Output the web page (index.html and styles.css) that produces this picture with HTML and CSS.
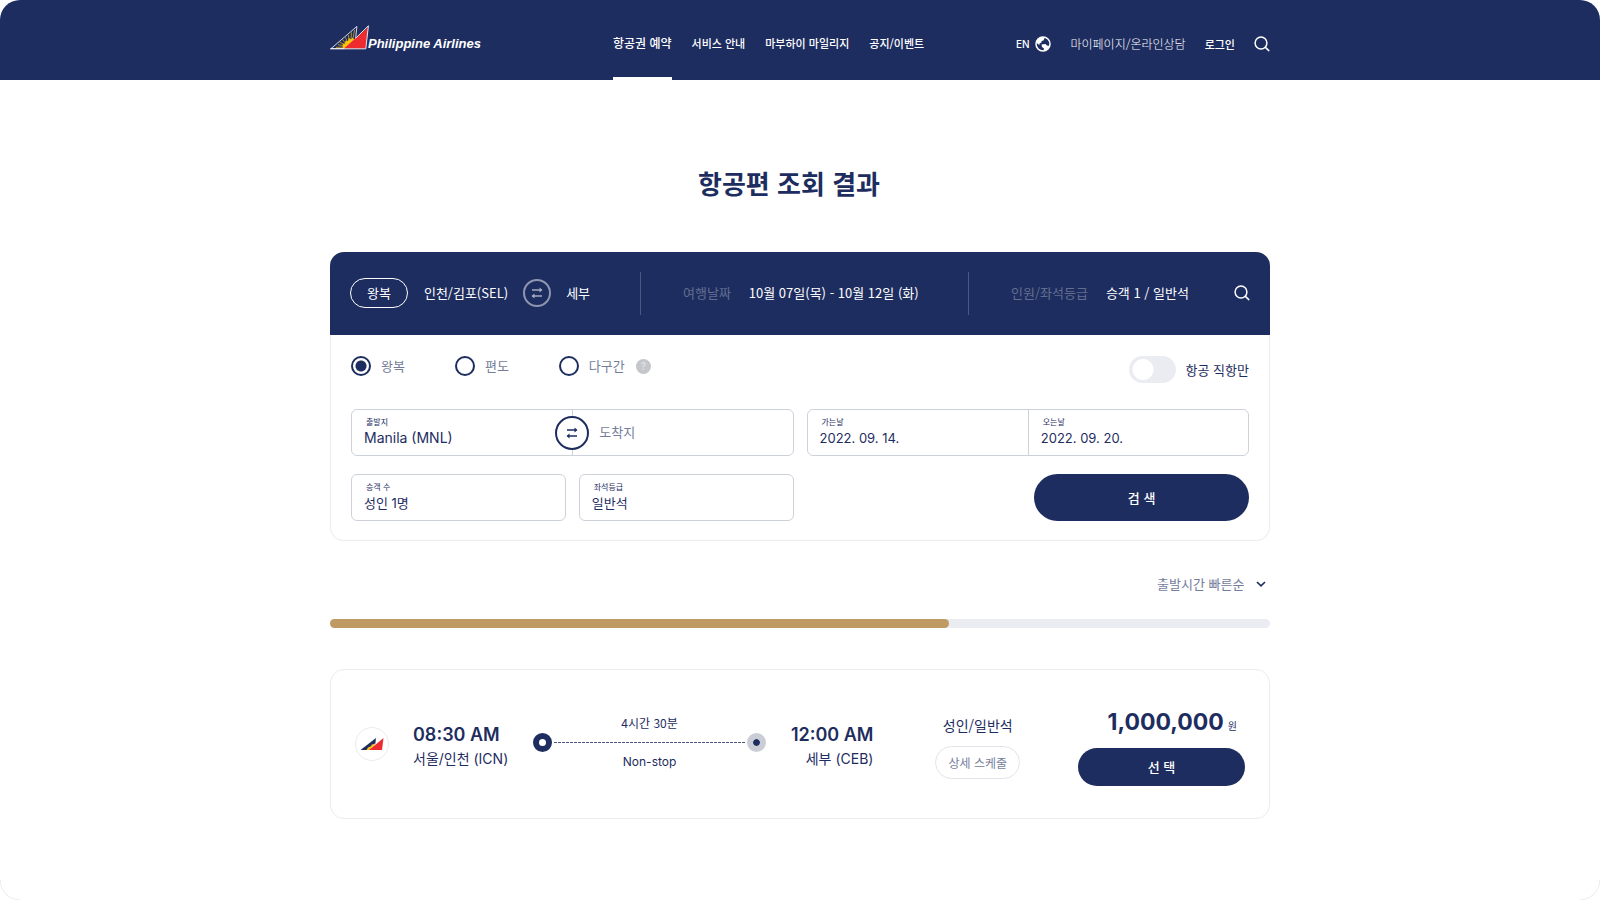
FILE: index.html
```html
<!DOCTYPE html>
<html lang="ko">
<head>
<meta charset="utf-8">
<meta name="viewport" content="width=device-width, initial-scale=1">
<title>항공편 조회 결과 - Philippine Airlines</title>
<link rel="stylesheet" href="styles.css">
</head>
<body>
<div class="page">
  <header class="site-header">
    <div class="container header-inner">
      <a class="brand" href="#">
        <svg class="brand-mark" viewBox="0 0 39 25" aria-hidden="true">
          <path d="M1 23.6 26.9 1.4 25.6 13.6 13.5 23.6Z" fill="none" stroke="#fff" stroke-width=".8"/>
          <path d="M14 22 6 22.4M14 21 8 19.6M15 20 9.500 17M16 19 12.500 14.500M17.500 17.500 15.500 12.500M19 16 18.500 10M21 15 21.500 7.500M23 14 24.500 5" stroke="#f2b90f" stroke-width=".7" fill="none"/>
          <path d="M12.500 23.400 13 20.500 12.500 18.800 15 18.500 15.500 15.800 18 16 19 13 21 14.500 22.500 12.500 23.500 14.200 25.400 13.800 14.500 23.400Z" fill="#fcc30b"/>
          <path d="M14 23.400 38 2.200 35.600 23.400Z" fill="#ee2b2e"/>
          <path d="M0 23.800H35.800L38.400 .800 25.600 13.200" fill="none" stroke="#fff" stroke-width=".9"/>
        </svg>
        <span class="brand-name">Philippine Airlines</span>
      </a>
      <nav class="main-nav" aria-label="주 메뉴">
        <a class="nav-link nav-link-active" href="#">항공권 예약</a>
        <a class="nav-link" href="#">서비스 안내</a>
        <a class="nav-link" href="#">마부하이 마일리지</a>
        <a class="nav-link" href="#">공지/이벤트</a>
      </nav>
      <div class="utility">
        <button class="lang" type="button">EN
          <svg class="icon-globe" viewBox="0 0 16 16" aria-hidden="true">
            <circle cx="8" cy="8" r="7" fill="none" stroke="#fff" stroke-width="1.500"/>
            <path d="M1.500 5.500C2.500 3 5 1 8 1L9.500 2.500 8.500 4.500 6.500 5 6.500 6.500 4.500 7.500 4.500 9 1.500 7Z" fill="#fff"/>
            <path d="M6.500 8.500 10.500 8 12 9.500 14.500 10C13.500 13 11 15 8.500 15L9 12.500 7 11Z" fill="#fff"/>
          </svg>
        </button>
        <a class="util-link util-link-light" href="#">마이페이지/온라인상담</a>
        <a class="util-link" href="#">로그인</a>
        <button class="icon-button" type="button" aria-label="검색">
          <svg class="icon-search" viewBox="0 0 16 16" aria-hidden="true"><circle cx="7" cy="7" r="5.900"/><path d="M11.400 11.400 14.800 14.600"/></svg>
        </button>
      </div>
    </div>
  </header>

  <main class="container">
    <h1 class="title">항공편 조회 결과</h1>

    <section class="panel">
      <div class="summary">
        <div class="summary-part summary-route">
          <span class="trip-pill">왕복</span>
          <span>인천/김포(SEL)</span>
          <span class="swap-badge">
            <svg class="icon-swap" viewBox="0 0 14 14" aria-hidden="true"><path d="M2 4H11.500M2.500 10H12"/><path class="head" d="M9.500 1.500 12.500 4 9.500 6.500ZM4.500 7.500 1.500 10 4.500 12.500Z"/></svg>
          </span>
          <span>세부</span>
        </div>
        <div class="summary-part">
          <span class="summary-label">여행날짜</span>
          <span>10월 07일(목) - 10월 12일 (화)</span>
        </div>
        <div class="summary-part summary-last">
          <span class="summary-label">인원/좌석등급</span>
          <span>승객 1 / 일반석</span>
          <button class="icon-button summary-search" type="button" aria-label="다시 검색">
            <svg class="icon-search" viewBox="0 0 16 16" aria-hidden="true"><circle cx="7" cy="7" r="5.900"/><path d="M11.400 11.400 14.800 14.600"/></svg>
          </button>
        </div>
      </div>

      <form class="search-form">
        <div class="options">
          <div class="radios">
            <label class="radio"><input class="radio-input" type="radio" name="trip" checked>왕복</label>
            <label class="radio"><input class="radio-input" type="radio" name="trip">편도</label>
            <label class="radio"><input class="radio-input" type="radio" name="trip">다구간</label>
            <button class="help" type="button" aria-label="도움말">?</button>
          </div>
          <label class="toggle"><input class="toggle-input" type="checkbox">항공 직항만</label>
        </div>
        <div class="fields">
          <div class="pair">
            <div class="field">
              <label class="field-label" for="from">출발지</label>
              <input class="field-input field-input-large" id="from" type="text" value="Manila (MNL)">
            </div>
            <div class="field field-to">
              <input class="field-input" type="text" placeholder="도착지" aria-label="도착지">
            </div>
            <button class="swap" type="button" aria-label="출발지와 도착지 바꾸기">
              <svg class="icon-swap" viewBox="0 0 14 14" aria-hidden="true"><path d="M2 4H11.500M2.500 10H12"/><path class="head" d="M9.500 1.500 12.500 4 9.500 6.500ZM4.500 7.500 1.500 10 4.500 12.500Z"/></svg>
            </button>
          </div>
          <div class="pair">
            <div class="field">
              <label class="field-label" for="depart">가는날</label>
              <input class="field-input" id="depart" type="text" value="2022. 09. 14.">
            </div>
            <div class="field">
              <label class="field-label" for="return">오는날</label>
              <input class="field-input" id="return" type="text" value="2022. 09. 20.">
            </div>
          </div>
          <div class="field field-single">
            <label class="field-label" for="pax">승객 수</label>
            <input class="field-input" id="pax" type="text" value="성인 1명">
          </div>
          <div class="field field-single">
            <label class="field-label" for="cabin">좌석등급</label>
            <input class="field-input" id="cabin" type="text" value="일반석">
          </div>
          <button class="primary submit" type="button">검 색</button>
        </div>
      </form>
    </section>

    <div class="sort">
      <select class="sort-select" aria-label="정렬"><option>출발시간 빠른순</option></select>
      <svg class="icon-chevron" viewBox="0 0 10 6" aria-hidden="true"><path d="M1 1 5 4.800 9 1"/></svg>
    </div>

    <div class="progress" role="progressbar" aria-label="조회 진행" aria-valuemin="0" aria-valuemax="100" aria-valuenow="66">
      <div class="progress-fill" style="width: 65.8%"></div>
    </div>

    <article class="flight">
      <div class="carrier">
        <svg class="carrier-mark" viewBox="0 0 24 14" aria-hidden="true">
          <path d="M.500 13 16 1 15.400 6.500 8 13Z" fill="#1e2d5f"/>
          <path d="M6.500 13 8 10.500 10.500 9.500 12 7.500 15.400 6.500 9.500 13Z" fill="#fcc30b"/>
          <path d="M9 13 23.500 1 22 13Z" fill="#ee2b2e"/>
        </svg>
      </div>
      <div class="journey">
        <div class="stop">
          <div class="stop-time">08:30 AM</div>
          <div class="stop-place">서울/인천 (ICN)</div>
        </div>
        <div class="route">
          <div class="route-text route-duration">4시간 30분</div>
          <div class="route-line">
            <span class="dot dot-start"></span>
            <span class="dash"></span>
            <span class="dot dot-end"></span>
          </div>
          <div class="route-text">Non-stop</div>
        </div>
        <div class="stop stop-end">
          <div class="stop-time">12:00 AM</div>
          <div class="stop-place">세부 (CEB)</div>
        </div>
      </div>
      <div class="fare">
        <div class="fare-class">성인/일반석</div>
        <button class="schedule" type="button">상세 스케줄</button>
      </div>
      <div class="price">
        <div class="price-row"><strong class="price-value">1,000,000</strong><span class="price-unit">원</span></div>
        <button class="primary select" type="button">선 택</button>
      </div>
    </article>
  </main>
</div>
</body>
</html>
```

FILE: styles.css
```css
:root {
  --navy: #1e2d5f;
  --muted: #747d9b;
  --line: #cdd1da;
  --faint: #ebecf0;
  --gold: #bf9a62;
}

* {
  box-sizing: border-box;
}

body {
  margin: 0;
  background: #fff;
  color: var(--navy);
  font: 400 13px/20px Inter, "Noto Sans CJK KR", sans-serif;
}

.site-header,
.title,
.summary,
.radio,
.toggle,
.sort-select,
.route-duration,
.fare,
.primary {
  font-family: "Noto Sans CJK KR", sans-serif;
}

a {
  color: inherit;
  text-decoration: none;
}

button,
input,
select {
  margin: 0;
  padding: 0;
  border: 0;
  background: none;
  color: inherit;
  font: inherit;
}

button {
  cursor: pointer;
}

svg {
  display: block;
  flex: none;
}

.page {
  position: relative;
  min-height: 100vh;
  border-radius: 20px;
  overflow: hidden;
  background: #fff;
}

/* Hairline arcs on the two lower corners */
.page::before,
.page::after {
  content: "";
  position: absolute;
  bottom: 0;
  width: 20px;
  height: 20px;
}

.page::before {
  left: 0;
  background: radial-gradient(circle at 100% 0, transparent 19px, #dcdde2 20px);
}

.page::after {
  right: 0;
  background: radial-gradient(circle at 0 0, transparent 19px, #dcdde2 20px);
}

.page::before,
.page::after {
  -webkit-mask: radial-gradient(circle at var(--arc-x, 100%) 0, #000 20px, transparent 21px);
  mask: radial-gradient(circle at var(--arc-x, 100%) 0, #000 20px, transparent 21px);
}

.page::after {
  --arc-x: 0%;
}

.container {
  width: 100%;
  max-width: 940px;
  margin: 0 auto;
}

/* Header */
.site-header {
  background: var(--navy);
  color: #fff;
}

.header-inner {
  display: grid;
  grid-template-columns: 283px 1fr auto;
  align-items: center;
  height: 80px;
}

.brand {
  display: flex;
  align-items: center;
}

.brand-mark {
  width: 39px;
  height: 25px;
  margin-bottom: 5px;
}

.brand-name {
  margin-left: -1px;
  padding-top: 7px;
  font: italic 700 13px/20px "Liberation Sans", sans-serif;
}

.main-nav {
  display: flex;
  gap: 20px;
  height: 100%;
  font-size: 11px;
  font-weight: 500;
}

.nav-link {
  display: flex;
  align-items: center;
  padding-top: 9px;
  border-bottom: 3px solid transparent;
  white-space: nowrap;
}

.nav-link-active {
  border-bottom-color: #fff;
  font-size: 12px;
}

.utility {
  display: flex;
  align-items: center;
  gap: 19px;
  padding-top: 7px;
}

.lang {
  display: flex;
  align-items: center;
  gap: 6px;
  font: 500 10px/20px Inter, sans-serif;
}

.icon-globe {
  width: 16px;
  height: 16px;
}

.util-link {
  padding-top: 1px;
  font-size: 11px;
  font-weight: 500;
}

.util-link-light {
  font-size: 12px;
  font-weight: 300;
}

.icon-search {
  width: 16px;
  height: 16px;
  fill: none;
  stroke: #fff;
  stroke-width: 1.5;
  stroke-linecap: round;
}

/* Title */
.title {
  margin: 83px 0 49px;
  padding-right: 22px;
  font-size: 26px;
  font-weight: 700;
  line-height: 40px;
  text-align: center;
}

/* Search panel */
.summary {
  display: grid;
  grid-template-columns: 311px 328px 1fr;
  align-items: center;
  height: 83px;
  padding-bottom: 1px;
  border-radius: 14px 14px 0 0;
  background: var(--navy);
  color: #fff;
}

.summary-part {
  display: flex;
  align-items: center;
  gap: 18px;
  height: 43px;
  padding-left: 42px;
  border-right: 1px solid #4b577f;
  white-space: nowrap;
}

.summary-route {
  gap: 15px;
  padding-left: 20px;
}

.summary-last {
  padding-right: 20px;
  border-right: 0;
}

.summary-label {
  color: #626d90;
}

.summary-search {
  margin-left: auto;
}

.trip-pill {
  padding: 4px 16px;
  border: 1px solid #fff;
  border-radius: 15px;
  margin-right: 1px;
}

.swap-badge {
  display: grid;
  place-items: center;
  width: 28px;
  height: 28px;
  border: 2px solid #8f96af;
  border-radius: 50%;
  color: #a5abbf;
}

.icon-swap {
  width: 14px;
  height: 14px;
  fill: none;
  stroke: currentColor;
  stroke-width: 1.3;
}

.icon-swap .head {
  fill: currentColor;
  stroke: none;
}

.search-form {
  padding: 21px 20px 19px;
  border: 1px solid var(--faint);
  border-top: 0;
  border-radius: 0 0 14px 14px;
}

.options {
  display: flex;
  justify-content: space-between;
  align-items: flex-start;
  margin-bottom: 26px;
}

.radios {
  display: flex;
  align-items: center;
}

.radio {
  display: flex;
  align-items: center;
  gap: 10px;
  margin-right: 50px;
  color: var(--muted);
}

.radio-input {
  appearance: none;
  width: 20px;
  height: 20px;
  border: 2px solid var(--navy);
  border-radius: 50%;
}

.radio-input:checked {
  background: radial-gradient(circle, var(--navy) 5px, transparent 6px);
}

.radio:nth-child(3) {
  margin-right: 11px;
}

.help {
  width: 15px;
  height: 15px;
  border-radius: 50%;
  background: #c5c6ca;
  color: #dddee2;
  font: 700 10px/15px Inter, sans-serif;
}

.toggle {
  display: flex;
  align-items: center;
  gap: 10px;
}

.toggle-input {
  appearance: none;
  width: 47px;
  height: 27px;
  border-radius: 14px;
  background: radial-gradient(circle at 14px 50%, #fff 10px, #ebecf1 11px);
}

.fields {
  display: grid;
  grid-template-columns: repeat(4, 1fr);
  gap: 18px 13px;
}

.pair {
  display: grid;
  grid-template-columns: 1fr 1fr;
  grid-column: span 2;
  position: relative;
  border: 1px solid var(--line);
  border-radius: 6px;
}

.field {
  display: flex;
  flex-direction: column;
  justify-content: center;
  min-width: 0;
  height: 45px;
  padding: 0 12px 2px;
}

.pair .field + .field {
  border-left: 1px solid var(--line);
}

.field-single {
  height: 47px;
  border: 1px solid var(--line);
  border-radius: 6px;
}

.pair .field-to {
  padding-left: 26px;
}

.field-label {
  padding-left: 2px;
  font-size: 8px;
  line-height: 12px;
}

.field-input {
  width: 100%;
  height: 20px;
  font-size: 13px;
  outline: 0;
}

.field-input-large {
  font-size: 14px;
}

.field-input::placeholder {
  color: var(--muted);
  opacity: 1;
}

.swap {
  display: grid;
  place-items: center;
  position: absolute;
  top: 50%;
  left: 50%;
  width: 34px;
  height: 34px;
  margin: -17px 0 0 -17px;
  border: 2px solid var(--navy);
  border-radius: 50%;
  background: #fff;
}

.primary {
  border-radius: 24px;
  background: var(--navy);
  color: #fff;
  font-weight: 500;
}

.submit {
  grid-column: 4;
}

/* Sorting and progress */
.sort {
  display: flex;
  justify-content: flex-end;
  align-items: center;
  gap: 12px;
  margin: 33px 4px 25px 0;
}

.sort-select {
  appearance: none;
  height: 20px;
  color: var(--muted);
}

.icon-chevron {
  width: 10px;
  height: 6px;
  fill: none;
  stroke: var(--navy);
  stroke-width: 1.7;
}

.progress {
  height: 9px;
  margin-bottom: 41px;
  border-radius: 5px;
  background: #ebecf1;
}

.progress-fill {
  height: 100%;
  border-radius: 5px;
  background: var(--gold);
}

/* Flight card */
.flight {
  display: flex;
  align-items: center;
  height: 150px;
  padding: 6px 24px 0;
  border: 1px solid var(--faint);
  border-radius: 14px;
}

.carrier {
  display: grid;
  place-items: center;
  width: 34px;
  height: 34px;
  margin: 0 24px 6px 0;
  border: 1px solid var(--faint);
  border-radius: 50%;
}

.carrier-mark {
  width: 24px;
  height: 14px;
}

.journey {
  display: flex;
  flex: 1;
  align-items: center;
  gap: 25px;
}

.stop-time {
  font-size: 18px;
  font-weight: 600;
  line-height: 24px;
}

.stop-place {
  font-size: 14px;
  line-height: 24px;
}

.stop-end {
  text-align: right;
}

.route {
  flex: 1;
  padding-bottom: 10px;
  text-align: center;
}

.route-text {
  font-size: 12px;
}

.route-line {
  display: flex;
  align-items: center;
  gap: 2px;
}

.dot {
  width: 19px;
  height: 19px;
  border: 6px solid var(--navy);
  border-radius: 50%;
}

.dot-end {
  border-color: #cacdd5;
  background: var(--navy);
  background-clip: padding-box;
}

.dash {
  flex: 1;
  height: 1px;
  background: repeating-linear-gradient(90deg, #4b577f 0 3px, transparent 3px 4px);
}

.fare {
  margin: 0 58px 0 62px;
  text-align: center;
}

.fare-class {
  margin-bottom: 11px;
  font-size: 14px;
}

.schedule {
  height: 33px;
  padding: 0 12px;
  border: 1px solid #e3e4ea;
  border-radius: 17px;
  color: var(--muted);
  font-size: 12px;
}

.price {
  width: 167px;
}

.price-row {
  display: flex;
  justify-content: flex-end;
  align-items: baseline;
  gap: 4px;
  margin-bottom: 12px;
  padding-right: 8px;
}

.price-value {
  font-size: 23px;
  line-height: 28px;
}

.price-unit {
  font-size: 10px;
}

.select {
  width: 100%;
  height: 38px;
}
```
